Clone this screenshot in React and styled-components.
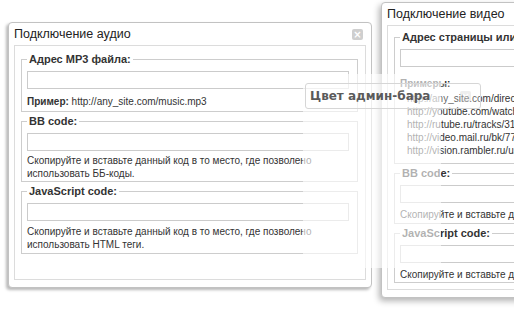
import React from "react"
import styled, { createGlobalStyle } from "styled-components"

const Global = createGlobalStyle`
  html, body { margin: 0; padding: 0; background: #fff; }
  * { box-sizing: border-box; }
`

const Desk = styled.div`
  position: relative;
  width: 514px;
  height: 315px;
  overflow: hidden;
  background: #fff;
  font-family: "Liberation Sans", Arial, sans-serif;
  color: #333;
`

const Win = styled.div`
  position: absolute;
  left: ${p => p.$x}px;
  top: ${p => p.$y}px;
  width: ${p => p.$w}px;
  height: ${p => p.$h}px;
  background: #fff;
  border: 1px solid #c2c2c2;
  border-radius: 4px;
  box-shadow: ${p => p.$shadow};
  padding: 0 5px 7px 5px;
  display: flex;
  flex-direction: column;
`

const TitleBar = styled.div`
  height: 22px;
  flex: none;
  display: flex;
  align-items: center;
  justify-content: space-between;
  font-size: 12.5px;
  color: #222;
  white-space: nowrap;
`

const Close = styled.span`
  width: 11px;
  height: 11px;
  margin-right: 3px;
  border-radius: 2px;
  background: #cfcfcf;
  color: #fff;
  font: bold 10px/11px "DejaVu Sans", sans-serif;
  text-align: center;
  opacity: ${p => p.$faint ? 0.35 : 1};
`

const Panel = styled.div`
  flex: 1;
  border: 1px solid #dcdcdc;
  padding: ${p => p.$top || 6}px 7px 0 6px;
  display: flex;
  flex-direction: column;
  gap: 2px;
  overflow: hidden;
`

const Set = styled.fieldset`
  margin: 0;
  border: 1px solid #cdcdcd;
  padding: 0 8px ${p => p.$pb ?? 1}px 5px;
  min-width: 0;
`

const Legend = styled.legend`
  padding: 0 2px;
  font-weight: bold;
  font-size: 11px;
  line-height: 14px;
  color: #333;
  white-space: nowrap;
`

const Field = styled.div`
  height: 18px;
  margin-top: 5px;
  border: 1px solid #cbcbcb;
  background: #fff;
`

const Note = styled.div`
  margin-top: ${p => p.$mt ?? 3}px;
  font-size: 10px;
  line-height: 13px;
  color: #333;
  white-space: ${p => p.$nowrap ? "nowrap" : "normal"};
`

const Links = styled.div`
  margin-top: 2px;
  padding-left: 7px;
  font-size: 10px;
  line-height: 13px;
  color: #333;
  white-space: nowrap;
`

const Fade = styled.div`
  position: absolute;
  left: 303px;
  top: 74px;
  width: 138px;
  height: 194px;
  background: rgba(255, 255, 255, 0.62);
`

const Ghost = styled.div`
  position: absolute;
  left: 305px;
  top: 83px;
  width: 176px;
  height: 26px;
  border: 1px solid #d6d6d6;
  border-radius: 3px;
  background: rgba(255, 255, 255, 0.25);
  display: flex;
  align-items: center;
  justify-content: space-between;
  padding: 0 6px 0 4px;
  font: bold 12px "DejaVu Sans", sans-serif;
  color: #5a5a5a;
`

const links = [
  "http://any_site.com/directlink",
  "http://youtube.com/watch?v=",
  "http://rutube.ru/tracks/3161",
  "http://video.mail.ru/bk/7777",
  "http://vision.rambler.ru/users",
]

export default function App() {
  return (
    <Desk>
      <Global />
      <Win $x={8} $y={22} $w={364} $h={266} $shadow="-2px 2px 3px rgba(0,0,0,0.28)">
        <TitleBar>
          <span>Подключение аудио</span>
          <Close>×</Close>
        </TitleBar>
        <Panel>
          <Set $pb={3}>
            <Legend>Адрес MP3 файла:</Legend>
            <Field />
            <Note $mt={6}><b>Пример:</b> http://any_site.com/music.mp3</Note>
          </Set>
          <Set>
            <Legend>BB code:</Legend>
            <Field />
            <Note>Скопируйте и вставьте данный код в то место, где позволено использовать ББ-коды.</Note>
          </Set>
          <Set $pb={2}>
            <Legend>JavaScript code:</Legend>
            <Field />
            <Note $mt={4}>Скопируйте и вставьте данный код в то место, где позволено использовать HTML теги.</Note>
          </Set>
        </Panel>
      </Win>

      <Win $x={381} $y={2} $w={430} $h={296} $shadow="-2px 3px 6px rgba(0,0,0,0.3)">
        <TitleBar>
          <span>Подключение видео</span>
        </TitleBar>
        <Panel $top={4}>
          <Set $pb={6}>
            <Legend>Адрес страницы или видео</Legend>
            <Field />
            <Note $mt={10}><b>Примеры:</b></Note>
            <Links>
              {links.map(l => <div key={l}>{l}</div>)}
            </Links>
          </Set>
          <Set $pb={2}>
            <Legend>BB code:</Legend>
            <Field />
            <Note $mt={5} $nowrap>Скопируйте и вставьте данный код в то место, где позволено использовать ББ-коды.</Note>
          </Set>
          <Set>
            <Legend>JavaScript code:</Legend>
            <Field />
            <Note $mt={5} $nowrap>Скопируйте и вставьте данный код в то место, где позволено использовать HTML теги.</Note>
          </Set>
        </Panel>
      </Win>

      <Fade />
      <Ghost>
        <span>Цвет админ-бара</span>
        <Close $faint>×</Close>
      </Ghost>
    </Desk>
  )
}
